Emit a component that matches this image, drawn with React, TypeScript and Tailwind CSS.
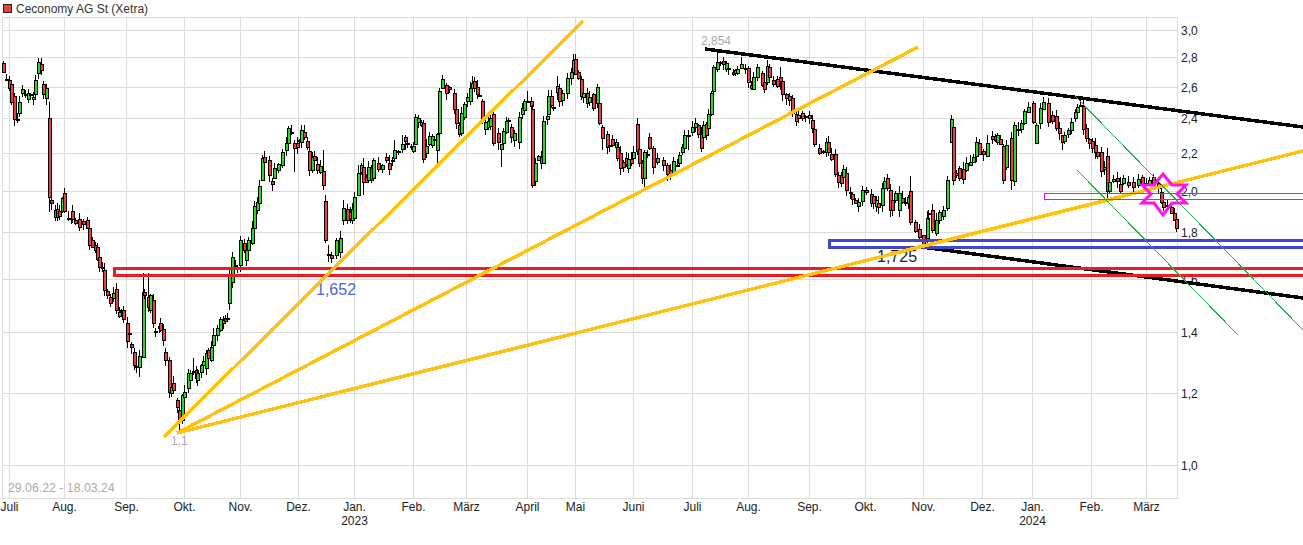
// Daily bars read off the chart: [x, open y, close y, wick top?, wick bottom?]
type Bar = [number, number, number, number?, number?]

const bars: Bar[] = [
	[3,63,72],[6,79,79],[9,80,88],[11,84,102],[14,96,119],[17,119,119],[19,113,102],[22,93,89],[25,94,94],[28,99,93],[30,94,94],[33,99,97],[35,94,80],[38,73,62,58,79],[41,64,70],[43,84,94],[46,98,88],
	[49,118,197,102,212],[51,200,203],[55,210,217],[57,209,217],[59,211,216],[62,211,198],[64,193,211],[68,218,218],[71,218,218],[72,211,219],[75,220,223],[79,219,227],[83,221,224],[87,220,228],[89,228,245],[92,240,247],[95,245,250],[97,247,259],[99,257,267],[102,267,267],
	[104,270,290],[107,291,295],[110,297,303],[113,298,293],[116,289,310],[119,316,312],[121,310,310],[123,310,319],[127,323,341],[129,333,333],[131,344,347],[134,352,365],[136,366,367],[139,367,356,350,377],[143,357,292,273,315],[144,292,295],[148,297,307,273,312],[150,310,295],[153,300,323],[155,331,331],[159,326,328],[160,323,330],[163,329,340],[165,352,360],[169,360,392],[171,393,387],[173,383,390],[177,400,407],[179,410,420,405,430],[182,420,395],[184,397,392],[188,388,373],[190,380,373],[193,371,371,358,375],[196,370,378],[197,380,373],[201,372,365],[203,365,361],[206,368,353],[208,350,358],[211,360,347],[213,345,335],[217,335,328],[220,330,319],[223,323,320],[225,318,321],[227,318,318],
	[229,303,275],[232,282,257],[235,265,265],[237,268,268],[240,265,240],[244,243,250],[246,260,250],[248,250,240],[252,243,228],[254,228,206],[257,210,202],[259,203,186],[262,180,158],[264,157,162],[269,160,175],[272,181,184],[274,178,168],[278,170,164],[282,165,152],[286,150,143],[288,143,128],[291,132,132,125,135],[294,143,148,140,172],[297,143,147],[299,140,140],[301,142,130],[304,132,137,125,140],[307,141,147],[309,151,170],[312,170,157],[314,156,160],[317,164,170],[320,172,166],[323,171,185,150,190],[325,201,240],[328,254,254,245,262],
	[331,255,258],[336,255,240],[340,252,238],[343,220,208,200,225],[347,209,220],[350,212,218],[352,220,209],[354,218,197],[358,195,173,165,195],[361,172,165],[363,167,182,158,195],[366,177,182],[368,180,167],[371,168,180],[373,178,160,158,180],[378,163,169,157,172],[382,169,165],[386,157,160],[389,163,169,155,175],[392,160,160],[394,158,150,140,160],[398,151,151],[402,149,144,135,153],[405,137,141,135,150],[407,143,143],[411,146,146],[413,151,146],[415,144,117,114,145],[418,122,118],[421,122,125],[423,123,159],[426,153,146],[429,144,136],[432,145,136],[434,139,139],[437,150,134,133,164],[439,133,91],[442,88,79,75,88],[446,85,93,83,100],[449,87,89],[454,93,109],[456,109,123],[459,125,134,122,137],[461,133,113],[464,117,104],[467,101,97],[470,101,88],[472,88,83],[474,81,88,77,92],[477,87,94],[479,95,95],[482,101,118],[485,129,122],[488,127,121],[490,126,118],[493,114,143,110,146],[498,133,142,128,150],[501,149,144,144,167],[503,143,131],[506,132,121],[508,120,120],[511,127,137],[514,140,133],[519,142,117],[522,114,108],[524,110,101],[527,101,101,91,102],[531,101,106],[532,109,185,105,188],[535,181,163],[538,160,156],[541,157,163],[543,163,121],[547,119,116],[548,114,96],[551,96,105],[553,107,107],[557,92,86,76,100],[559,88,101],[562,100,93],[567,93,78],[571,78,72],[573,72,60],[575,59,74],[578,72,78],[581,79,96],[583,97,93],[587,93,103],[589,102,97],[593,94,108],[597,103,87,84,108],[599,103,123],[602,127,138,125,150],[607,134,147],[609,145,145],[612,139,145],[616,147,142],[617,147,158],[620,153,168],[623,162,167],[626,158,164],[628,168,159],[631,159,163],[633,158,152],[637,124,151,118,155],[639,149,163],[642,163,178],[644,178,152,150,188],[647,154,154],[649,137,148,133,150],[653,148,167],[657,162,158],
	[663,160,165],[667,165,174],[670,170,175],[673,173,161],[677,165,165],[679,163,155],[682,152,147],[684,148,135],[688,135,135,130,150],[692,132,127],[695,127,123],[698,125,134],[701,134,148],[703,137,125],[706,124,135],[708,128,114],[711,114,93],[713,91,67],[717,69,62,50,72],[720,62,62],[723,61,64],[726,69,63],[728,68,68],[733,72,74],[735,73,70],[737,73,69],[741,68,64],[745,68,68],[748,68,82],[751,85,88],[753,89,77],[757,77,67],[762,73,85],[764,82,89],[767,82,66,60,85],[769,67,77],[773,80,84],[777,79,86],[780,77,81,67,90],[782,81,94],[786,94,98],[789,96,100],[792,98,113],[796,114,121],[798,118,115],[802,113,118],[805,116,116],[809,115,118],[812,120,128],[814,129,144],[819,148,153],[823,151,151],[826,152,142],[828,142,152],[831,154,159],[835,154,174],[838,175,182],[841,175,183],[843,177,169,165,180],[846,173,190],[850,192,192],[852,194,199],[855,200,203],[858,206,202],[862,201,190],[866,190,192],[871,194,203],[873,196,203],[876,206,200],[878,203,207],[882,205,188],[884,188,181],[887,178,188],[890,190,210],[892,200,210],[895,200,193],[899,210,193],[902,198,202],[905,202,202],[908,203,197],[910,191,222,176,225],[915,222,231],[919,229,237],[923,235,244,235,248],[927,238,218],[928,213,213],[932,210,230],[936,233,220],[939,220,212],[943,216,210],[947,208,180],[951,142,119,115,142],[953,127,180],[956,173,175],[959,168,178],[963,169,179],[966,170,163],[970,165,162],[973,162,157],[976,156,142],[979,143,154],[983,151,154],[987,156,143,135,157],
	[992,136,139],[995,136,140],[997,142,135],[1000,139,144],[1003,146,180],[1006,167,145],[1011,138,180,132,190],[1014,181,125],[1018,129,129],[1021,129,123],[1024,123,111],[1028,112,107,102,112],[1033,103,122],[1036,143,125],[1040,123,108],[1043,109,102,97,109],[1048,103,122],[1052,115,121],[1056,116,128],[1059,128,133],[1062,135,142,135,150],[1064,141,135],[1068,134,130],[1071,130,122],[1075,118,112],[1077,112,107],[1080,105,105,100,106],[1083,106,129],[1086,128,138],[1089,139,143],[1092,141,148],[1095,145,152],[1097,152,156],[1101,152,171],[1104,169,167],[1107,156,191,148,199],[1109,191,182],[1113,181,179],[1117,178,181],[1120,184,191],[1123,183,178],[1128,182,185],[1133,182,187],[1138,185,179],[1142,177,185],[1146,183,183],[1149,184,180],[1153,177,184],[1158,183,188],[1161,192,202],[1163,202,207],[1167,205,206],[1171,207,213,203,213],[1174,213,220,208,220],[1176,219,228],
]

const monthGrid = [9.5, 64.5, 126.5, 184.5, 240.5, 298.5, 354.5, 413.5, 466.5, 527.5, 575.5, 633.5, 692.5, 748.5, 809.5, 865.5, 923.5, 982.5, 1032.5, 1091.5, 1146.5]
const priceGrid = [30.5, 57.5, 87.5, 118.5, 153.5, 191.5, 232.5, 279.5, 332.5, 393.5, 465.5]

const months = ['Juli', 'Aug.', 'Sep.', 'Okt.', 'Nov.', 'Dez.', 'Jan.', 'Feb.', 'März', 'April', 'Mai', 'Juni', 'Juli', 'Aug.', 'Sep.', 'Okt.', 'Nov.', 'Dez.', 'Jan.', 'Feb.', 'März']
const prices = ['3,0', '2,8', '2,6', '2,4', '2,2', '2,0', '1,8', '1,6', '1,4', '1,2', '1,0']

// small repeatable offset so wicks without a reading don't all look the same
const wobble = (i: number, seed: number) => {
	const v = Math.sin(i * 12.9898 + seed * 78.233) * 43758.5453
	return v - Math.floor(v)
}

function Candle({ bar, index }: { bar: Bar; index: number }) {
	const [x, open, close, hi, lo] = bar
	const cx = Math.floor(x) + 0.5
	const top = Math.min(open, close)
	const bottom = Math.max(open, close)
	const wickTop = hi ?? top - 1 - Math.round(wobble(index, 1) * 6)
	const wickBottom = lo ?? bottom + 1 + Math.round(wobble(index, 2) * 6)
	const fill = close < open ? '#22dd22' : '#f03c3c'
	return (
		<g>
			<line x1={cx} x2={cx} y1={wickTop} y2={wickBottom} stroke="#000" />
			{bottom - top < 2 ? (
				<line x1={cx - 2} x2={cx + 2} y1={top + 0.5} y2={top + 0.5} stroke="#000" strokeWidth={2} />
			) : (
				<rect x={cx - 1} y={Math.floor(top) + 0.5} width={3} height={Math.round(bottom - top)} fill={fill} stroke="#000" />
			)}
		</g>
	)
}

function Chart() {
	return (
		<svg width={1303} height={528} viewBox="0 17 1303 528" className="block">
			<g stroke="#dcdcdc" shapeRendering="crispEdges">
				{monthGrid.map((x) => (
					<line key={x} x1={x} x2={x} y1={17.5} y2={498.5} />
				))}
				{priceGrid.map((y) => (
					<line key={y} x1={2.5} x2={1177.5} y1={y} y2={y} />
				))}
				<rect x={2.5} y={17.5} width={1175} height={481} fill="none" />
			</g>

			<g fontSize={12} fill="#222">
				{prices.map((p, i) => (
					<text key={i} x={1181} y={priceGrid[i] + 4.5}>{p}</text>
				))}
				{months.map((m, i) => (
					<text key={i} x={monthGrid[i]} y={511} textAnchor="middle">{m}</text>
				))}
				<text x={354.5} y={525} textAnchor="middle">2023</text>
				<text x={1032.5} y={525} textAnchor="middle">2024</text>
			</g>

			<g shapeRendering="crispEdges">
				{bars.map((bar, i) => (
					<Candle key={i} bar={bar} index={i} />
				))}
			</g>

			<g fontSize={12} fill="#aaa">
				<text x={8} y={492} fontSize={12.3}>29.06.22 - 18.03.24</text>
				<text x={701} y={45}>2,854</text>
				<text x={171} y={445} fill="#b5a9a9">1,1</text>
			</g>
			<text x={316} y={295} fontSize={16} fill="#4a66e0">1,652</text>
			<text x={877} y={262} fontSize={16} fill="#222">1,725</text>

			{/* hand drawn trend lines and zones on top of the candles */}
			<g shapeRendering="crispEdges" fill="none">
				<line x1={705} y1={49} x2={1303} y2={127} stroke="#000" strokeWidth={3.5} />
				<line x1={922} y1={247} x2={1303} y2={298} stroke="#000" strokeWidth={3.5} />
				<rect x={114.5} y={268.5} width={1300} height={7} stroke="#ed1c24" strokeWidth={3} />
				<rect x={829.5} y={240.5} width={600} height={7} stroke="#3f48cc" strokeWidth={3} />
				<line x1={164} y1={437} x2={583} y2={21} stroke="#ffc20e" strokeWidth={3.5} />
				<line x1={177} y1={433} x2={918} y2={47} stroke="#ffc20e" strokeWidth={3.5} />
				<line x1={177} y1={433} x2={1303} y2={151} stroke="#ffc20e" strokeWidth={3.5} />
				<line x1={1075} y1={96} x2={1303} y2={330} stroke="#22b14c" />
				<line x1={1077} y1={170} x2={1238} y2={335} stroke="#22b14c" />
				<rect x={1044.5} y={193.5} width={300} height={6} stroke="#ff00ff" />
			</g>
			<polygon
				points="1163,174 1172,185 1186,185 1177,194 1186,203 1172,203 1163,215 1154,203 1142,203 1151,194 1142,185 1154,185"
				fill="none"
				stroke="#ff14e6"
				strokeWidth={3}
			/>
		</svg>
	)
}

export default function App() {
	return (
		<div className="h-[545px] w-[1303px] overflow-hidden bg-white font-['Liberation_Sans',Arial,sans-serif]">
			<header className="flex h-[17px] items-center gap-[4px] pl-[3px] text-xs text-[#333]">
				<span className="h-[9px] w-[9px] border border-[#222] bg-[#f03c3c]" />
				<span>Ceconomy AG St (Xetra)</span>
			</header>
			<Chart />
		</div>
	)
}
